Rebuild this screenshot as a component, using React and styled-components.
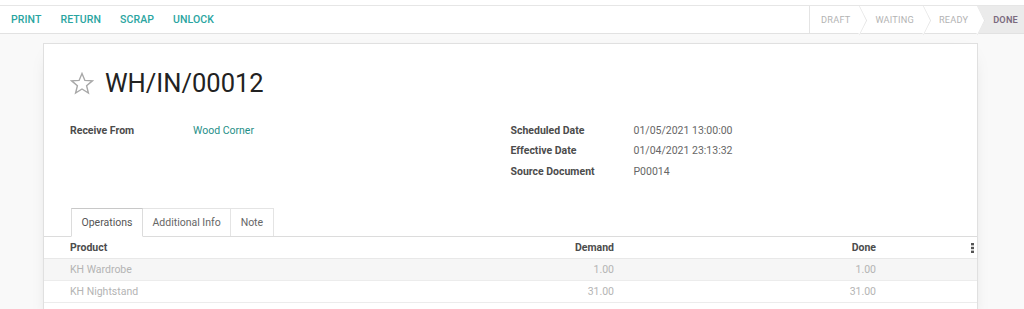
import React from 'react';
import styled, { createGlobalStyle } from 'styled-components';

const GlobalStyle = createGlobalStyle`
  html, body {
    margin: 0;
    padding: 0;
    background: #f9f9f9;
    font-family: Roboto, 'Liberation Sans', sans-serif;
    font-size: 10.5px;
    color: #4c4c4c;
  }
  * { box-sizing: border-box; }
`;

// top action bar
const TopStrip = styled.div`
  height: 5px;
  background: #fff;
`;

const ControlPanel = styled.div`
  display: flex;
  justify-content: space-between;
  align-items: stretch;
  height: 29px;
  background: #fff;
  border-top: 1px solid #e6e6e6;
  border-bottom: 1px solid #e2e2e2;
`;

const Buttons = styled.div`
  display: flex;
  align-items: center;
  gap: 19px;
  padding-left: 11px;
`;

const ActionButton = styled.span`
  color: #2aa5a1;
  font-weight: 500;
  font-size: 10.5px;
  letter-spacing: 0.1px;
`;

const StatusBar = styled.div`
  display: flex;
  align-items: stretch;
  border-left: 1px solid #e4e4e4;
`;

const Status = styled.div`
  position: relative;
  display: flex;
  align-items: center;
  padding: 0 ${p => (p.$last ? '6px' : '10px')} 0 ${p => (p.$first ? '11px' : '15px')};
  font-size: 9.2px;
  font-weight: ${p => (p.$active ? 600 : 400)};
  color: ${p => (p.$active ? '#7a6a7e' : '#b3b3b3')};
  background: ${p => (p.$active ? '#ebebeb' : '#fff')};
  letter-spacing: 0.2px;

  &::after {
    content: ${p => (p.$last ? 'none' : "''")};
    position: absolute;
    z-index: 1;
    top: 4px;
    right: -10px;
    width: 20px;
    height: 20px;
    background: #fff;
    border-top: 1px solid #e0e0e0;
    border-right: 1px solid #e0e0e0;
    transform: scaleX(0.5) rotate(45deg);
  }
`;

// form sheet
const Content = styled.div`
  padding: 9px 46px 0 43px;
`;

const Sheet = styled.div`
  background: #fff;
  border: 1px solid #e0e0e0;
  box-shadow: 0 6px 18px -12px rgba(0, 0, 0, 0.35);
  padding-top: 21px;
  min-height: 280px;
`;

const TitleRow = styled.div`
  display: flex;
  align-items: center;
  gap: 11px;
  padding: 0 26px;
`;

const Title = styled.h1`
  margin: 0;
  font-size: 25.5px;
  font-weight: 400;
  line-height: 36px;
  color: #222;
`;

const FieldGroups = styled.div`
  display: grid;
  grid-template-columns: 1fr 1fr;
  padding: 20px 26px 0;
`;

const Field = styled.div`
  display: grid;
  grid-template-columns: 123px 1fr;
  line-height: 20.3px;
`;

const Label = styled.span`
  font-weight: 700;
  color: #4c4c4c;
`;

const Value = styled.span`
  color: ${p => (p.$link ? '#1f8f88' : '#666')};
`;

const Tabs = styled.div`
  display: flex;
  margin-top: 26px;
  padding-left: 27px;
  border-bottom: 1px solid #dcdcdc;
  height: 29px;
`;

const Tab = styled.div`
  display: flex;
  align-items: center;
  padding: 0 9.5px;
  font-size: 10.5px;
  color: ${p => (p.$active ? '#555' : '#666')};
  background: #fff;
  border: 1px solid ${p => (p.$active ? '#dcdcdc' : '#e4e4e4')};
  border-top-color: ${p => (p.$active ? '#c8c8c8' : '#e4e4e4')};
  border-left-width: ${p => (p.$first ? '1px' : '0')};
  border-bottom: ${p => (p.$active ? '1px solid #fff' : 'none')};
  margin-bottom: ${p => (p.$active ? '-1px' : '0')};
`;

const columns = '370px 200px 262px 1fr';

const HeadRow = styled.div`
  display: grid;
  grid-template-columns: ${columns};
  align-items: center;
  height: 22px;
  border-bottom: 1px solid #e8e8e8;
  box-shadow: 0 2px 3px -1px rgba(0, 0, 0, 0.06);
  font-weight: 700;
  color: #4c4c4c;
`;

const Row = styled.div`
  display: grid;
  grid-template-columns: ${columns};
  align-items: center;
  height: 22px;
  background: ${p => (p.$striped ? '#f6f6f6' : '#fff')};
  border-bottom: 1px solid #ececec;
  color: #b4b4b4;
`;

const Cell = styled.div`
  padding-left: ${p => (p.$first ? '26px' : '0')};
  padding-right: ${p => (p.$menu ? '3px' : '0')};
  text-align: ${p => (p.$right ? 'right' : 'left')};
`;

const Star = () => (
  <svg width="24" height="23" viewBox="0 0 24 23">
    <polygon
      points="12,1.5 14.9,8.4 22.3,8.9 16.6,13.7 18.4,21 12,17 5.6,21 7.4,13.7 1.7,8.9 9.1,8.4"
      fill="none"
      stroke="#a8a8a8"
      strokeWidth="1.4"
      strokeLinejoin="miter"
    />
  </svg>
);

const Dots = () => (
  <svg width="3" height="10" viewBox="0 0 3 10" style={{ display: 'inline-block', verticalAlign: 'middle' }}>
    <rect x="0" y="0" width="3" height="2.4" fill="#555" />
    <rect x="0" y="3.8" width="3" height="2.4" fill="#555" />
    <rect x="0" y="7.6" width="3" height="2.4" fill="#555" />
  </svg>
);

const statuses = ['DRAFT', 'WAITING', 'READY', 'DONE'];

const lines = [
  { product: 'KH Wardrobe', demand: '1.00', done: '1.00' },
  { product: 'KH Nightstand', demand: '31.00', done: '31.00' },
];

export default function App() {
  return (
    <>
      <GlobalStyle />
      <TopStrip />
      <ControlPanel>
        <Buttons>
          <ActionButton>PRINT</ActionButton>
          <ActionButton>RETURN</ActionButton>
          <ActionButton>SCRAP</ActionButton>
          <ActionButton>UNLOCK</ActionButton>
        </Buttons>
        <StatusBar>
          {statuses.map((s, i) => (
            <Status
              key={s}
              $first={i === 0}
              $last={i === statuses.length - 1}
              $active={s === 'DONE'}
            >
              {s}
            </Status>
          ))}
        </StatusBar>
      </ControlPanel>
      <Content>
        <Sheet>
          <TitleRow>
            <Star />
            <Title>WH/IN/00012</Title>
          </TitleRow>
          <FieldGroups>
            <div>
              <Field>
                <Label>Receive From</Label>
                <Value $link>Wood Corner</Value>
              </Field>
            </div>
            <div>
              <Field>
                <Label>Scheduled Date</Label>
                <Value>01/05/2021 13:00:00</Value>
              </Field>
              <Field>
                <Label>Effective Date</Label>
                <Value>01/04/2021 23:13:32</Value>
              </Field>
              <Field>
                <Label>Source Document</Label>
                <Value>P00014</Value>
              </Field>
            </div>
          </FieldGroups>
          <Tabs>
            <Tab $active $first>Operations</Tab>
            <Tab>Additional Info</Tab>
            <Tab>Note</Tab>
          </Tabs>
          <HeadRow>
            <Cell $first>Product</Cell>
            <Cell $right>Demand</Cell>
            <Cell $right>Done</Cell>
            <Cell $right $menu><Dots /></Cell>
          </HeadRow>
          {lines.map((l, i) => (
            <Row key={l.product} $striped={i === 0}>
              <Cell $first>{l.product}</Cell>
              <Cell $right>{l.demand}</Cell>
              <Cell $right>{l.done}</Cell>
              <Cell />
            </Row>
          ))}
        </Sheet>
      </Content>
    </>
  );
}
